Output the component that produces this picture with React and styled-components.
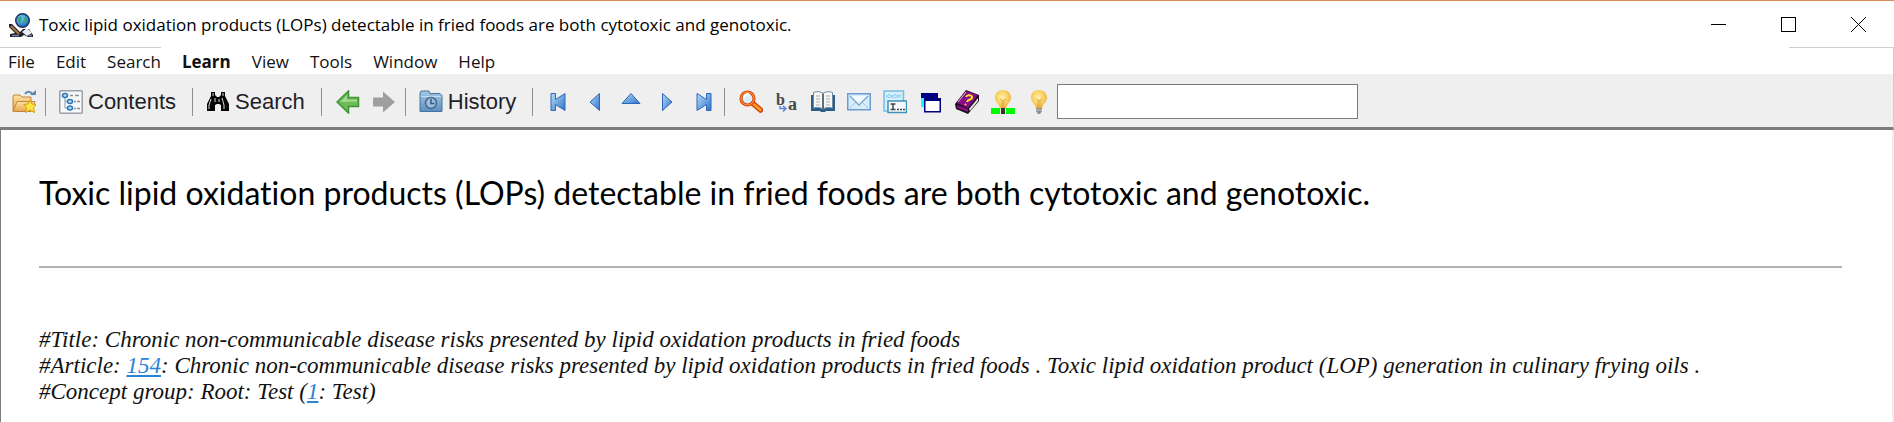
import React from 'react';
import styled, { createGlobalStyle, css } from 'styled-components';

const GlobalStyle = createGlobalStyle`
  *, *::before, *::after {
    box-sizing: border-box;
  }

  body {
    margin: 0;
    background-color: white;
    color: black;
  }
`;

const Window = styled.div`
  min-height: 100vh;
  display: flex;
  flex-direction: column;
  border-top: 1px solid #d68c58;
`;

const TitleBar = styled.header`
  display: flex;
  align-items: center;
  height: 46px;
  padding: 1px 0 0 9px;
  font: 17px/24px "Open Sans", "Noto Sans", sans-serif;
`;

const WindowTitle = styled.span`
  flex: 1;
  margin-left: 6px;
  white-space: nowrap;
`;

const WindowButton = styled.button`
  display: flex;
  align-items: center;
  justify-content: center;
  width: 70px;
  height: 44px;
  padding: 0;
  border: 0;
  background: none;
`;

const Edge = styled.div`
  display: flex;
  justify-content: space-between;

  &::before, &::after {
    content: '';
    width: 161px;
    height: 1px;
    background-color: #cfcfcf;
  }

  &::after {
    width: 105px;
  }
`;

const MenuBar = styled.nav`
  display: flex;
  height: 26px;
  border-right: 1px solid #cfcfcf;
`;

const MenuButton = styled.button`
  padding: 0 11px 0 10px;
  border: 0;
  background: none;
  color: #111;
  font: 17px/28px "Open Sans", "Noto Sans", sans-serif;

  &:first-child {
    padding-left: 8px;
  }

  ${ props => props.$active && css`font-weight: bold;` }
`;

const ToolBar = styled.div`
  display: flex;
  align-items: center;
  height: 56px;
  padding: 2px 0 0 6px;
  background-color: #efefef;
  border-right: 1px solid #cfcfcf;
  border-bottom: 3px solid #7d7d7d;
`;

const Separator = styled.span`
  width: 1px;
  height: 28px;
  margin: 0 8px 0 3px;
  background-color: #8f8f8f;
`;

const ToolButton = styled.button`
  display: flex;
  align-items: center;
  justify-content: center;
  width: 36px;
  height: 36px;
  padding: 0;
  border: 0;
  background: none;
  color: #1e1e28;
  font: 22px/36px "Liberation Sans", Arial, sans-serif;

  ${ props => props.$labelled && css`
    width: auto;
    gap: 5px;
    padding: 0 13px 0 5px;
  ` }
`;

const SearchBox = styled.input`
  width: 301px;
  height: 35px;
  padding: 0 6px;
  border: 1px solid #7a7a7a;
  background-color: white;
  font: 22px/32px "Liberation Sans", Arial, sans-serif;
`;

const Page = styled.main`
  flex: 1;
  padding: 41px 50px 16px 38px;
  border-left: 1px solid #7d7d7d;
  border-right: 2px solid #f0f0f0;
`;

const Heading = styled.h1`
  margin: 0;
  font: 32px/44px Lato, "Open Sans", sans-serif;
  font-variant-ligatures: none;
`;

const Rule = styled.hr`
  height: 2px;
  margin: 51px 0 59px;
  border: 0;
  background-color: #b3b3b3;
`;

const Line = styled.p`
  margin: 0;
  color: #111;
  font: italic 23px/26px "Liberation Serif", "Times New Roman", serif;
`;

const PageLink = styled.a`
  color: #2b83d6;
  text-decoration: underline;
`;

const Icon = ({ children, size = 24 }) => (
  <svg width={ size } height={ size } viewBox={ `0 0 ${ size } ${ size }` } aria-hidden="true">
    { children }
  </svg>
);

const Gradients = () => (
  <svg width="0" height="0" style={{ position: 'absolute' }} aria-hidden="true">
    <defs>
      <linearGradient id="blue" x1="0" y1="0" x2="1" y2="1">
        <stop offset="0" stopColor="#b5dcf6" />
        <stop offset="1" stopColor="#2f74cc" />
      </linearGradient>
      <linearGradient id="folder" x1="0" y1="0" x2="0" y2="1">
        <stop offset="0" stopColor="#fce3a4" />
        <stop offset="1" stopColor="#e9a54a" />
      </linearGradient>
      <linearGradient id="steel" x1="0" y1="0" x2="0" y2="1">
        <stop offset="0" stopColor="#a5c8e6" />
        <stop offset="1" stopColor="#5f8fbd" />
      </linearGradient>
      <radialGradient id="bulb" cx="0.45" cy="0.4" r="0.6">
        <stop offset="0" stopColor="#fff0b0" />
        <stop offset="0.5" stopColor="#fbd66b" />
        <stop offset="1" stopColor="#eeb03c" />
      </radialGradient>
      <radialGradient id="globe" cx="0.4" cy="0.35" r="0.65">
        <stop offset="0" stopColor="#79d3f2" />
        <stop offset="1" stopColor="#1d62b4" />
      </radialGradient>
    </defs>
  </svg>
);

const AppIcon = () => (
  <Icon>
    <path d="M0 11h3l8 8 3-3h6l4 6v2h-5l-4-2-3 2H1v-3l5-1-6-6z" fill="#20232d" />
    <path d="M2 13l8 8" stroke="#b07a3d" strokeWidth="2" />
    <path d="M13 19l5-4 5 5-5 3z" fill="#eceef6" />
    <path d="M3 22.500h7M20 22.500h3" stroke="#7482aa" strokeWidth="1.500" />
    <circle cx="13.500" cy="7.500" r="6.800" fill="url(#globe)" stroke="#1c3262" strokeWidth="1.400" />
    <path d="M9 5l3-2 1 3-2 4-2-2zM15 6l3-2 1 3-3 4-2-2z" fill="#36a58a" />
  </Icon>
);

const FolderIcon = () => (
  <Icon>
    <path d="M1 21V6l1-1h6l2 2h9v5" fill="url(#folder)" stroke="#bd8540" />
    <path d="M1 21.500l4-10h18l-4 10z" fill="url(#folder)" stroke="#bd8540" />
    <path d="M13 4c2-3 6-3 8 1" fill="none" stroke="#5d89b0" strokeWidth="2" />
    <path d="M18 5h6V0z" fill="#5d89b0" />
    <path d="M18 10l2 4 4.500.500-3 3 1 5-4.500-2.500-4.500 2.500 1-5-3-3 4.500-.500z" fill="#ffe63b" stroke="#d69a1c" />
  </Icon>
);

const ContentsIcon = () => (
  <Icon>
    <rect x="0.75" y="0.75" width="22.500" height="22.500" rx="1" fill="#f7f8fa" stroke="#9aa0a6" strokeWidth="1.500" />
    <path d="M6 6v12h4M6 11h4" fill="none" stroke="#7f9cb8" />
    <path d="M11 5.500h3M16 5.500h4M15 11.500h2M18 11.500h3M15 18.500h2M18 18.500h3" stroke="#8a8f96" strokeWidth="1.500" />
    <g fill="#b7dcf5" stroke="#2f75b5" strokeWidth="1.500">
      <ellipse cx="6" cy="5.500" rx="2.500" ry="2" />
      <ellipse cx="11" cy="11.500" rx="2.500" ry="2" />
      <ellipse cx="11" cy="18" rx="2.500" ry="2" />
    </g>
  </Icon>
);

const BinocularsIcon = () => (
  <Icon>
    <path d="M5 2h4v3l2 2h2l2-2V2h4v4l4 8v7h-8v-6l-2-1h-2l-2 1v6H1v-7l4-8z" fill="#050505" />
    <path d="M7 3v3M17 3v3M5 9l-2 6v4M9 8v4M16 8l2 7v4M13 9v3" stroke="#d9d9d9" fill="none" />
  </Icon>
);

const BackIcon = () => (
  <Icon>
    <path d="M1 12L12.500 1v6.500h10v9h-10V23z" fill="#6dbb56" stroke="#3c9432" strokeWidth="1.500" />
    <path d="M4 12l7-7v4.500h10v2z" fill="#a4d98d" />
  </Icon>
);

const ForwardIcon = () => (
  <Icon>
    <path d="M1 7.500h10V1.500L23 12 11 22.500v-6H1z" fill="#9f9f9f" />
  </Icon>
);

const HistoryIcon = () => (
  <Icon>
    <path d="M1 21.500V3l1-2h8l1 2.500h10l2 2v16z" fill="url(#steel)" stroke="#47759f" />
    <path d="M2 6.500h20" stroke="#c3dcf0" />
    <circle cx="12" cy="13" r="5.500" fill="#9dbddb" stroke="#416b94" strokeWidth="1.500" />
    <path d="M12 9v4.500h3.500" fill="none" stroke="#365c83" strokeWidth="1.500" />
  </Icon>
);

const NAV_PATHS = {
  first: 'M4 3.500h4.500v6L18 3.500v17l-9.500-6v6H4z',
  previous: 'M16.500 3.500v17L7 12z',
  up: 'M3 13.500L12 3.500l9 10z',
  next: 'M7.500 3.500v17L17 12z',
  last: 'M20 3.500h-4.500v6L6 3.500v17l9.500-6v6H20z',
};

const NavIcon = ({ direction }) => (
  <Icon>
    <path d={ NAV_PATHS[direction] } fill="url(#blue)" stroke="#2e66ba" />
  </Icon>
);

const MagnifierIcon = () => (
  <Icon>
    <path d="M14 13.500l7.500 6.500" stroke="#c9450d" strokeWidth="5.500" strokeLinecap="round" />
    <path d="M14 13.500l7.500 6.500" stroke="#ff9a24" strokeWidth="2.500" strokeLinecap="round" />
    <circle cx="8.500" cy="8.500" r="6.500" fill="#d9eefa" stroke="#d94f10" strokeWidth="3.200" />
    <circle cx="8.500" cy="8.500" r="6.500" fill="none" stroke="#ff9a3c" />
    <path d="M5 8c0-3 2-4 5-4" fill="none" stroke="white" strokeWidth="2" />
  </Icon>
);

const LettersIcon = () => (
  <Icon>
    <text x="1" y="15" fontFamily="Liberation Serif, serif" fontWeight="bold" fontSize="16" fill="#484848">b</text>
    <text x="13" y="20" fontFamily="Liberation Serif, serif" fontWeight="bold" fontSize="18" fill="#484848">a</text>
    <path d="M5 16v2.500h5M8 16l3 2.500-3 3" fill="none" stroke="#5d86e0" strokeWidth="1.500" />
  </Icon>
);

const BookIcon = () => (
  <Icon>
    <path d="M0 5h24v16h-9l-1 1h-4l-1-1H0z" fill="#2c5e8c" />
    <path d="M2.500 2.500c4-1.500 7-1 9.500 1 2.500-2 5.500-2.500 9.500-1V18c-4-1-7-.500-9.500 1-2.500-1.500-5.500-2-9.500-1z" fill="#f6f6f2" stroke="#6d8ca6" />
    <path d="M12 3.500V19" stroke="#586f82" strokeWidth="2" />
    <path d="M5 6h4M5 9h4M5 12h4M5 15h4M15 6h4M15 9h4M15 12h4M15 15h4" stroke="#aaa" />
  </Icon>
);

const MailIcon = () => (
  <Icon>
    <rect x="0.75" y="3.750" width="22.500" height="16" fill="#d9edf9" stroke="#6c9ccb" strokeWidth="1.500" />
    <path d="M3 18l6-6M21 18l-6-6" stroke="#a4c6e4" />
    <path d="M3 6l9 9 9-9" fill="#f3faff" stroke="#78a5d0" strokeWidth="1.300" />
  </Icon>
);

const CardIcon = () => (
  <Icon>
    <rect x="1" y="1" width="19.500" height="20" fill="#d6effb" stroke="#79bbe2" strokeWidth="1.500" />
    <path d="M3 8l3-4 3 4 3-4 3 4 3-4M3 5l3 3 3-3 3 3 3-3 3 3" fill="none" stroke="#8accf0" />
    <rect x="5" y="11" width="18.500" height="11.500" fill="#f4fafd" stroke="#3f92bd" strokeWidth="1.500" />
    <path d="M7.500 14h5M10 14v5M7.500 19.500h5M14 19.500h2M17 19.500h2M20 19.500h2" stroke="#444" strokeWidth="1.500" />
  </Icon>
);

const WindowsIcon = () => (
  <Icon>
    <path d="M2 3h17v5H2z" fill="#000080" />
    <path d="M2 8h15v9H2z" fill="#1ff" />
    <rect x="5.750" y="8.750" width="15.500" height="13" fill="white" stroke="#000080" strokeWidth="1.500" />
    <path d="M5 8h17v3H5z" fill="#000080" />
  </Icon>
);

const HelpBookIcon = () => (
  <Icon>
    <path d="M0 14L11 0l13 5v6L13 24 1 19z" fill="#191019" />
    <path d="M2 13L11 1l12 4-10 13z" fill="#880b88" />
    <path d="M3 12L11 2" stroke="#e8b6e8" />
    <path d="M14 19l9-11v3L15 21z" fill="#e6e6e6" />
    <path d="M2 15l11 4v3L2 18z" fill="#880b88" />
    <path d="M11 7c1-3 7-2 6 1-1 2-4 1-5 4M11 14l-1 1" fill="none" stroke="#f5e321" strokeWidth="2" />
  </Icon>
);

const BulbIcon = ({ underlined }) => (
  <Icon>
    { underlined && <path d="M0 18h9v6H0zM15 18h9v6h-9z" fill="#00fa00" /> }
    <path d="M12 0c5 0 8 3.500 8 7.500 0 5-4 5.500-5 11H9C8 13 4 12.500 4 7.500 4 3.500 7 0 12 0z" fill="url(#bulb)" />
    <path d="M9 9l3 2 3-2M11 11v7M13 11v7" fill="none" stroke="#d59a3a" strokeWidth="0.800" />
    <path d={ underlined ? 'M10 18h4v6h-4z' : 'M9 18h6v3l-2 3h-2l-2-3z' } fill={ underlined ? '#333' : '#8f8f8f' } />
    { !underlined && <path d="M9 20h6" stroke="#ccc" /> }
  </Icon>
);

const MENU_ITEMS = ['File', 'Edit', 'Search', 'Learn', 'View', 'Tools', 'Window', 'Help'];

const DIRECTIONS = ['first', 'previous', 'up', 'next', 'last'];

const TOOLS = [
  { name: 'Find', icon: <MagnifierIcon /> },
  { name: 'Replace', icon: <LettersIcon /> },
  { name: 'Read', icon: <BookIcon /> },
  { name: 'Mail', icon: <MailIcon /> },
  { name: 'Card', icon: <CardIcon /> },
  { name: 'Windows', icon: <WindowsIcon /> },
  { name: 'Glossary', icon: <HelpBookIcon /> },
  { name: 'Mark hint', icon: <BulbIcon underlined /> },
  { name: 'Hint', icon: <BulbIcon /> },
];

const TITLE = 'Toxic lipid oxidation products (LOPs) detectable in fried foods are both cytotoxic and genotoxic.';

export default function App() {
  return (
    <Window>
      <GlobalStyle />
      <Gradients />
      <TitleBar>
        <AppIcon />
        <WindowTitle>{ TITLE }</WindowTitle>
        <WindowButton aria-label="Minimize">
          <Icon size={ 16 }><path d="M0 7.500h15" stroke="black" /></Icon>
        </WindowButton>
        <WindowButton aria-label="Maximize">
          <Icon size={ 16 }><rect x="0.500" y="0.500" width="14" height="14" fill="none" stroke="black" /></Icon>
        </WindowButton>
        <WindowButton aria-label="Close">
          <Icon size={ 16 }><path d="M0 0l15 15M15 0L0 15" stroke="black" /></Icon>
        </WindowButton>
      </TitleBar>
      <Edge />
      <MenuBar>
        { MENU_ITEMS.map(item => (
          <MenuButton key={ item } $active={ item === 'Learn' }>{ item }</MenuButton>
        )) }
      </MenuBar>
      <ToolBar role="toolbar">
        <ToolButton aria-label="Open favorites"><FolderIcon /></ToolButton>
        <Separator />
        <ToolButton $labelled><ContentsIcon />Contents</ToolButton>
        <Separator />
        <ToolButton $labelled><BinocularsIcon />Search</ToolButton>
        <Separator />
        <ToolButton aria-label="Back"><BackIcon /></ToolButton>
        <ToolButton aria-label="Forward"><ForwardIcon /></ToolButton>
        <Separator />
        <ToolButton $labelled><HistoryIcon />History</ToolButton>
        <Separator />
        { DIRECTIONS.map(direction => (
          <ToolButton key={ direction } aria-label={ direction }>
            <NavIcon direction={ direction } />
          </ToolButton>
        )) }
        <Separator />
        { TOOLS.map(tool => (
          <ToolButton key={ tool.name } aria-label={ tool.name }>{ tool.icon }</ToolButton>
        )) }
        <SearchBox type="text" aria-label="Search text" />
      </ToolBar>
      <Page>
        <Heading>{ TITLE }</Heading>
        <Rule />
        <Line>#Title: Chronic non-communicable disease risks presented by lipid oxidation products in fried foods</Line>
        <Line>
          #Article: <PageLink href="#154">154</PageLink>: Chronic non-communicable disease risks presented by lipid oxidation products in fried foods . Toxic lipid oxidation product (LOP) generation in culinary frying oils .
        </Line>
        <Line>#Concept group: Root: Test (<PageLink href="#1">1</PageLink>: Test)</Line>
      </Page>
    </Window>
  );
}
